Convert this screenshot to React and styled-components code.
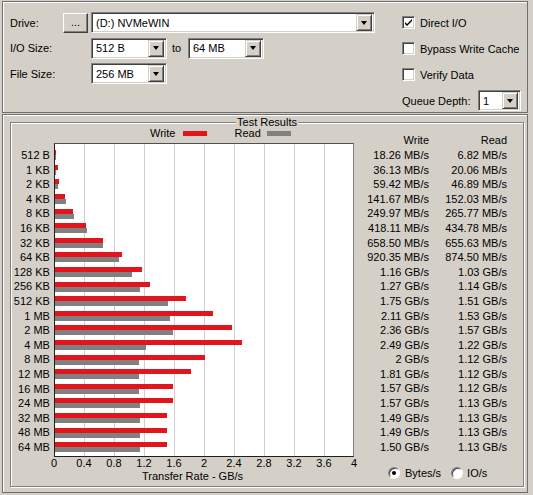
import React from "react";
import styled, { createGlobalStyle } from "styled-components";

const GlobalStyle = createGlobalStyle`
  html, body {
    margin: 0;
    background: #d4d0c8;
    font-family: "Liberation Sans", Arial, sans-serif;
    font-size: 11px;
    color: #000;
  }
`;

const Page = styled.div`
  width: 526px;
  padding: 1px 0 0 2px;
  display: flex;
  flex-direction: column;
  gap: 1px;
`;

const Panel = styled.div`
  box-sizing: border-box;
  height: ${(p) => p.$h}px;
  border: 1px solid #6f6f6f;
  box-shadow: inset 1px 1px 0 #fff;
`;

const TopPanel = styled(Panel)`
  display: flex;
  padding: 10px 0 0 7px;
`;

const SettingsCol = styled.div`
  display: flex;
  flex-direction: column;
  gap: 4.5px;
`;

const FieldRow = styled.div`
  display: flex;
  align-items: center;
  height: 21px;
`;

const FieldLabel = styled.span`
  width: 53px;
`;

const Controls = styled.div`
  display: flex;
  align-items: center;
  padding-left: ${(p) => p.$indent || 0}px;
`;

const RaisedButton = styled.div`
  box-sizing: border-box;
  width: 25px;
  height: 20px;
  margin-right: 3px;
  background: #d4d0c8;
  border: 1px solid;
  border-color: #fff #404040 #404040 #fff;
  box-shadow: inset -1px -1px 0 #808080;
  display: flex;
  align-items: center;
  justify-content: center;
  padding-bottom: 2px;
`;

const ComboBox = styled.div`
  box-sizing: border-box;
  width: ${(p) => p.$w}px;
  height: 21px;
  background: #fff;
  border: 1px solid;
  border-color: #808080 #fff #fff #808080;
  box-shadow: inset 1px 1px 0 #404040, inset -1px -1px 0 #d4d0c8;
  display: flex;
  align-items: center;
  padding: 0 2px 0 4px;
`;

const ComboText = styled.span`
  flex: 1;
  white-space: nowrap;
`;

const DropButton = styled.div`
  box-sizing: border-box;
  width: 16px;
  height: 17px;
  background: #d4d0c8;
  border: 1px solid;
  border-color: #d4d0c8 #404040 #404040 #d4d0c8;
  box-shadow: inset 1px 1px 0 #fff, inset -1px -1px 0 #808080;
  display: flex;
  align-items: center;
  justify-content: center;
  &::after {
    content: "";
    border-left: 3.5px solid transparent;
    border-right: 3.5px solid transparent;
    border-top: 4px solid #000;
  }
`;

const ToText = styled.span`
  width: 16px;
  padding-left: 5px;
`;

const OptionsCol = styled.div`
  margin-left: 27px;
  display: flex;
  flex-direction: column;
  gap: 5px;
`;

const OptionRow = styled.div`
  display: flex;
  align-items: center;
  height: 21px;
`;

const CheckBox = styled.div`
  box-sizing: border-box;
  width: 13px;
  height: 13px;
  margin-right: 5px;
  background: #fff;
  border: 1px solid;
  border-color: #808080 #fff #fff #808080;
  box-shadow: inset 1px 1px 0 #404040, inset -1px -1px 0 #d4d0c8;
  display: flex;
  align-items: center;
  justify-content: center;
`;

const QueueLabel = styled.span`
  width: 76px;
`;

const BottomPanel = styled(Panel)`
  padding: 7px 3px 5px 7px;
`;

const GroupBox = styled.div`
  position: relative;
  box-sizing: border-box;
  height: 100%;
  border: 1px solid #808080;
  box-shadow: 1px 1px 0 #fff, inset 1px 1px 0 #fff;
  display: flex;
  padding: 4px 0 0 1px;
`;

const GroupTitle = styled.span`
  position: absolute;
  top: -7px;
  left: 50%;
  transform: translateX(-50%);
  background: #d4d0c8;
  padding: 0 1px;
  line-height: 13px;
`;

const ChartCol = styled.div`
  width: 342px;
  flex-shrink: 0;
  display: flex;
  flex-direction: column;
`;

const Legend = styled.div`
  height: 12px;
  padding-left: 138px;
  display: flex;
  align-items: center;
`;

const Swatch = styled.span`
  width: 24px;
  height: 5px;
  margin: 0 ${(p) => p.$after}px 0 ${(p) => p.$before}px;
  background: ${(p) => p.$color};
`;

const PlotRow = styled.div`
  margin-top: 4px;
  height: 314px;
  display: flex;
`;

const SizeLabels = styled.div`
  width: 42px;
  box-sizing: border-box;
  padding: 5px 4px 0 0;
  text-align: right;
`;

const SizeLabel = styled.div`
  height: 14.6px;
  line-height: 14.6px;
  white-space: nowrap;
`;

const Plot = styled.div`
  box-sizing: border-box;
  width: 301px;
  height: 314px;
  border: 1px solid #404040;
  border-color: #505050 #808080 #202020 #202020;
  padding-top: 4px;
  background: #fff
    repeating-linear-gradient(
      to right,
      transparent 0 29px,
      #cfcfcf 29px 30px
    );
`;

const BarRow = styled.div`
  height: 14.6px;
  display: flex;
  flex-direction: column;
  justify-content: center;
`;

const Bar = styled.div`
  height: 5px;
  background: ${(p) => p.$color};
`;

const AxisRow = styled.div`
  margin-left: 27px;
  height: 13px;
  display: flex;
`;

const AxisTick = styled.span`
  flex: 0 0 30px;
  text-align: center;
  line-height: 13px;
`;

const AxisTitle = styled.div`
  padding-left: 130px;
  line-height: 13px;
`;

const ResultsCol = styled.div`
  padding-top: 6.4px;
  display: flex;
  flex-direction: column;
`;

const ResultRow = styled.div`
  display: grid;
  grid-template-columns: 75px 78px;
  height: 14.6px;
  line-height: 14.6px;
  text-align: right;
  white-space: nowrap;
`;

const RadioRow = styled.div`
  margin-top: 12px;
  height: 13px;
  padding-left: 34px;
  display: flex;
  align-items: center;
`;

const Radio = styled.span`
  box-sizing: border-box;
  width: 12px;
  height: 12px;
  border-radius: 50%;
  background: #fff;
  border: 1px solid;
  border-color: #808080 #fff #fff #808080;
  box-shadow: inset 1px 1px 0 #404040;
  display: flex;
  align-items: center;
  justify-content: center;
  margin-right: ${(p) => p.$gap}px;
  &::after {
    content: "";
    width: 4px;
    height: 4px;
    border-radius: 50%;
    background: ${(p) => (p.$on ? "#000" : "transparent")};
  }
`;

const RadioText = styled.span`
  margin-right: ${(p) => p.$after || 0}px;
`;

const results = [
  ["512 B", "18.26 MB/s", "6.82 MB/s"],
  ["1 KB", "36.13 MB/s", "20.06 MB/s"],
  ["2 KB", "59.42 MB/s", "46.89 MB/s"],
  ["4 KB", "141.67 MB/s", "152.03 MB/s"],
  ["8 KB", "249.97 MB/s", "265.77 MB/s"],
  ["16 KB", "418.11 MB/s", "434.78 MB/s"],
  ["32 KB", "658.50 MB/s", "655.63 MB/s"],
  ["64 KB", "920.35 MB/s", "874.50 MB/s"],
  ["128 KB", "1.16 GB/s", "1.03 GB/s"],
  ["256 KB", "1.27 GB/s", "1.14 GB/s"],
  ["512 KB", "1.75 GB/s", "1.51 GB/s"],
  ["1 MB", "2.11 GB/s", "1.53 GB/s"],
  ["2 MB", "2.36 GB/s", "1.57 GB/s"],
  ["4 MB", "2.49 GB/s", "1.22 GB/s"],
  ["8 MB", "2 GB/s", "1.12 GB/s"],
  ["12 MB", "1.81 GB/s", "1.12 GB/s"],
  ["16 MB", "1.57 GB/s", "1.12 GB/s"],
  ["24 MB", "1.57 GB/s", "1.13 GB/s"],
  ["32 MB", "1.49 GB/s", "1.13 GB/s"],
  ["48 MB", "1.49 GB/s", "1.13 GB/s"],
  ["64 MB", "1.50 GB/s", "1.13 GB/s"],
];

const ticks = ["0", "0.4", "0.8", "1.2", "1.6", "2", "2.4", "2.8", "3.2", "3.6", "4"];

// 300px wide plot = 4 GB/s
const toPx = (str) => {
  const n = parseFloat(str);
  const gb = str.includes("MB") ? n / 1024 : n;
  return Math.max(1, gb * 75);
};

const Combo = ({ w, children }) => (
  <ComboBox $w={w}>
    <ComboText>{children}</ComboText>
    <DropButton />
  </ComboBox>
);

export default function App() {
  return (
    <>
      <GlobalStyle />
      <Page>
        <TopPanel $h={112}>
          <SettingsCol>
            <FieldRow>
              <FieldLabel>Drive:</FieldLabel>
              <RaisedButton>...</RaisedButton>
              <Combo w={284}>(D:) NVMeWIN</Combo>
            </FieldRow>
            <FieldRow>
              <FieldLabel>I/O Size:</FieldLabel>
              <Controls $indent={28}>
                <Combo w={76}>512 B</Combo>
                <ToText>to</ToText>
                <Combo w={76}>64 MB</Combo>
              </Controls>
            </FieldRow>
            <FieldRow>
              <FieldLabel>File Size:</FieldLabel>
              <Controls $indent={28}>
                <Combo w={76}>256 MB</Combo>
              </Controls>
            </FieldRow>
          </SettingsCol>
          <OptionsCol>
            <OptionRow>
              <CheckBox>
                <svg width="9" height="9" viewBox="0 0 9 9">
                  <path d="M1 4 L3 6 L8 1 V3 L3 8 L1 6 Z" fill="#000" />
                </svg>
              </CheckBox>
              Direct I/O
            </OptionRow>
            <OptionRow>
              <CheckBox />
              Bypass Write Cache
            </OptionRow>
            <OptionRow>
              <CheckBox />
              Verify Data
            </OptionRow>
            <OptionRow>
              <QueueLabel>Queue Depth:</QueueLabel>
              <Combo w={43}>1</Combo>
            </OptionRow>
          </OptionsCol>
        </TopPanel>
        <BottomPanel $h={379}>
          <GroupBox>
            <GroupTitle>Test Results</GroupTitle>
            <ChartCol>
              <Legend>
                Write
                <Swatch $color="#e3151c" $before={8} $after={27} />
                Read
                <Swatch $color="#808080" $before={6} $after={0} />
              </Legend>
              <PlotRow>
                <SizeLabels>
                  {results.map((r) => (
                    <SizeLabel key={r[0]}>{r[0]}</SizeLabel>
                  ))}
                </SizeLabels>
                <Plot>
                  {results.map((r) => (
                    <BarRow key={r[0]}>
                      <Bar $color="#e3151c" style={{ width: toPx(r[1]) }} />
                      <Bar $color="#808080" style={{ width: toPx(r[2]) }} />
                    </BarRow>
                  ))}
                </Plot>
              </PlotRow>
              <AxisRow>
                {ticks.map((t) => (
                  <AxisTick key={t}>{t}</AxisTick>
                ))}
              </AxisRow>
              <AxisTitle>Transfer Rate - GB/s</AxisTitle>
            </ChartCol>
            <ResultsCol>
              <ResultRow>
                <span>Write</span>
                <span>Read</span>
              </ResultRow>
              {results.map((r) => (
                <ResultRow key={r[0]}>
                  <span>{r[1]}</span>
                  <span>{r[2]}</span>
                </ResultRow>
              ))}
              <RadioRow>
                <Radio $on $gap={5} />
                <RadioText $after={10}>Bytes/s</RadioText>
                <Radio $gap={4} />
                <RadioText>IO/s</RadioText>
              </RadioRow>
            </ResultsCol>
          </GroupBox>
        </BottomPanel>
      </Page>
    </>
  );
}
